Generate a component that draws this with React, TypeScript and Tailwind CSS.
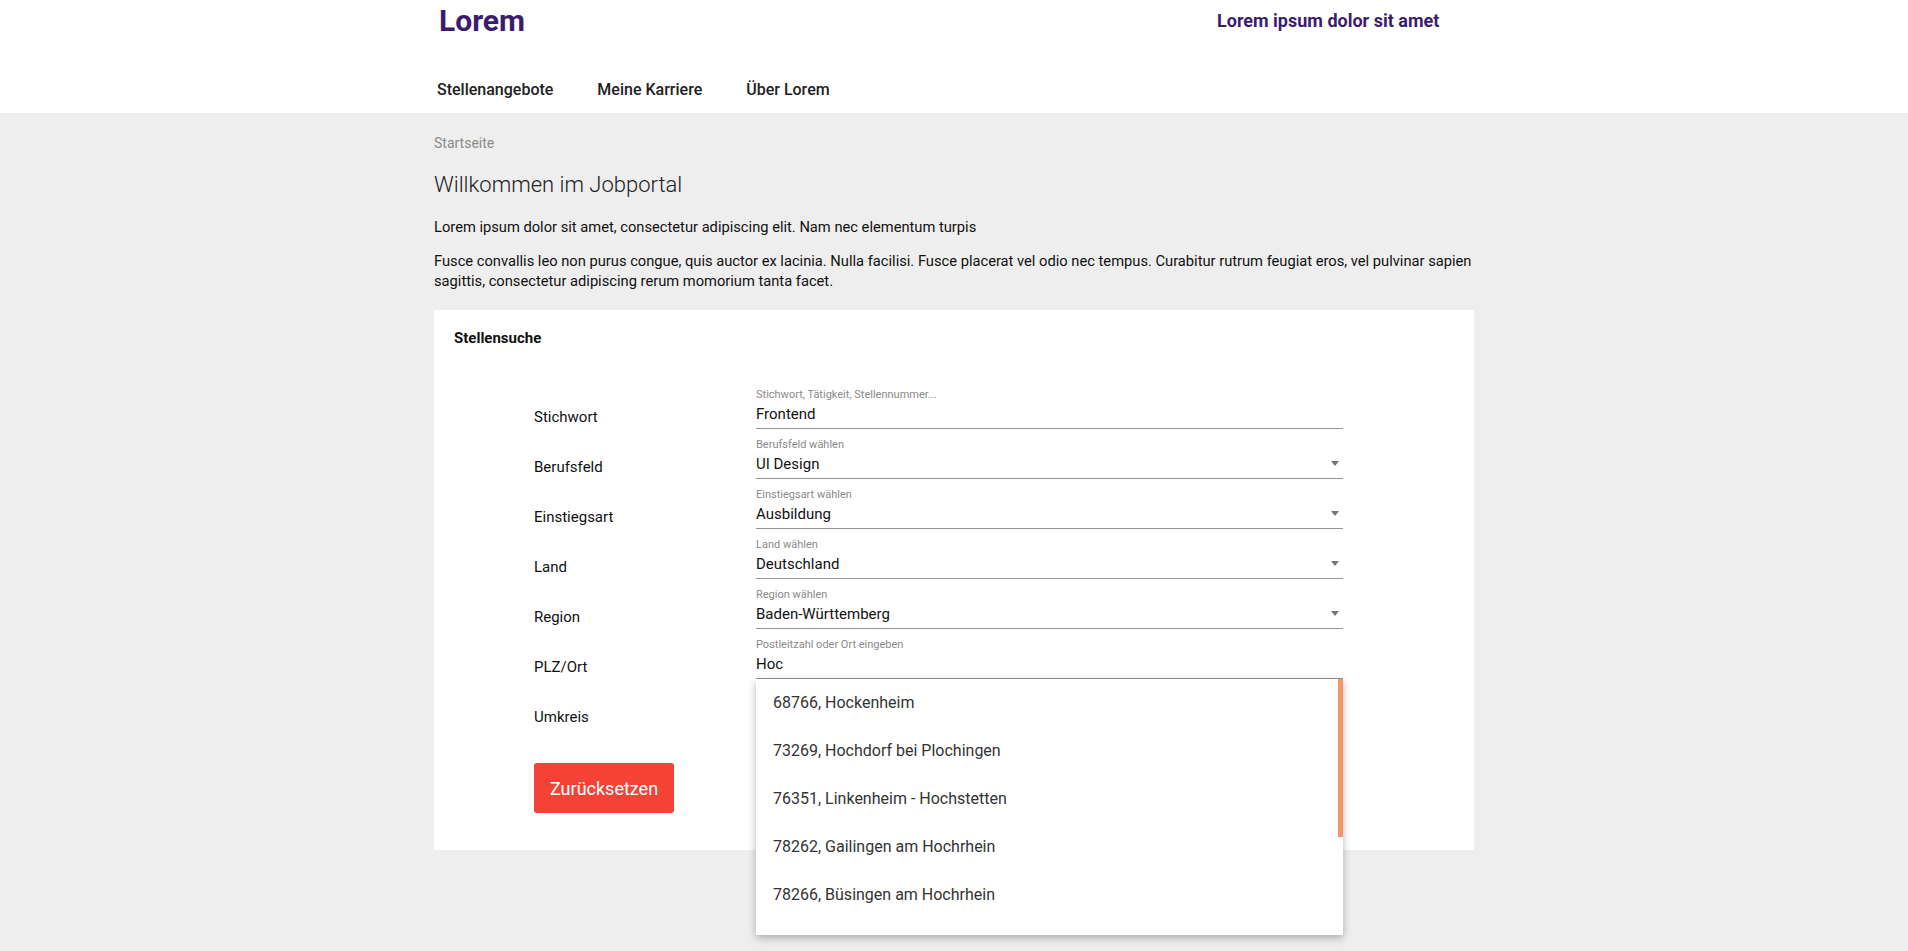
import { useState } from "react";

const fields = [
  { label: "Stichwort", hint: "Stichwort, Tätigkeit, Stellennummer...", value: "Frontend", select: false },
  { label: "Berufsfeld", hint: "Berufsfeld wählen", value: "UI Design", select: true },
  { label: "Einstiegsart", hint: "Einstiegsart wählen", value: "Ausbildung", select: true },
  { label: "Land", hint: "Land wählen", value: "Deutschland", select: true },
  { label: "Region", hint: "Region wählen", value: "Baden-Württemberg", select: true },
];

const orte = [
  "68766, Hockenheim",
  "73269, Hochdorf bei Plochingen",
  "76351, Linkenheim - Hochstetten",
  "78262, Gailingen am Hochrhein",
  "78266, Büsingen am Hochrhein",
];

function Arrow() {
  return (
    <svg width="8" height="5" viewBox="0 0 8 5" className="mb-[2px]">
      <path d="M0 0 L8 0 L4 5 Z" fill="#767676" />
    </svg>
  );
}

function Field({ hint, value, select }: { hint: string; value: string; select?: boolean }) {
  return (
    <div className="h-[41px] border-b border-[#949494]">
      <div className="text-[11px] leading-[14px] text-[#8a8a8a]">{hint}</div>
      <div className="mt-[2px] flex items-center justify-between pr-[4px] text-[15px] leading-[20px] text-[#111]">
        <span>{value}</span>
        {select && <Arrow />}
      </div>
    </div>
  );
}

export default function App() {
  const [plz] = useState("Hoc");

  return (
    <div className="min-h-screen bg-[#eeeeee] font-['Roboto',sans-serif]">
      <header className="h-[113px] bg-white">
        <div className="mx-auto w-[1040px]">
          <div className="flex items-start">
            <div className="w-[783px] pl-[5px] pt-[6px] text-[30px] font-bold leading-none text-[#3a1c6e]">
              Lorem
            </div>
            <div className="pt-[12px] text-[18px] font-bold leading-none text-[#3a1c6e]">
              Lorem ipsum dolor sit amet
            </div>
          </div>
          <nav className="mt-[46px] flex gap-[44px] pl-[3px] text-[16px] font-medium leading-none text-[#212121]">
            <span>Stellenangebote</span>
            <span>Meine Karriere</span>
            <span>Über Lorem</span>
          </nav>
        </div>
      </header>

      <main className="mx-auto w-[1040px] pb-[100px]">
        <div className="pt-[23px] text-[14px] leading-none text-[#8a8a8a]">Startseite</div>
        <h1 className="mt-[24px] text-[22px] font-light leading-none text-[#212121]">
          Willkommen im Jobportal
        </h1>
        <p className="mt-[21px] text-[14.7px] leading-[20px] text-[#111]">
          Lorem ipsum dolor sit amet, consectetur adipiscing elit. Nam nec elementum turpis
        </p>
        <p className="mt-[14px] w-[1070px] text-[14.7px] leading-[20px] text-[#111]">
          Fusce convallis leo non purus congue, quis auctor ex lacinia. Nulla facilisi. Fusce placerat vel odio nec
          tempus. Curabitur rutrum feugiat eros, vel pulvinar sapien sagittis, consectetur adipiscing rerum momorium
          tanta facet.
        </p>

        <section className="mt-[19px] bg-white px-[20px] pb-[37px] pt-[18px]">
          <h2 className="text-[15px] font-bold leading-[20px] text-[#111]">Stellensuche</h2>

          <div className="mt-[40px] flex flex-col gap-[9px] pl-[80px]">
            {fields.map((f) => (
              <div key={f.label} className="flex">
                <div className="w-[222px] pt-[19px] text-[15px] leading-[20px] text-[#111]">{f.label}</div>
                <div className="w-[587px]">
                  <Field hint={f.hint} value={f.value} select={f.select} />
                </div>
              </div>
            ))}

            <div className="flex">
              <div className="w-[222px] pt-[19px] text-[15px] leading-[20px] text-[#111]">PLZ/Ort</div>
              <div className="relative w-[587px]">
                <Field hint="Postleitzahl oder Ort eingeben" value={plz} />
                <div className="absolute left-0 top-full z-10 h-[256px] w-full overflow-hidden bg-white shadow-[0_3px_8px_rgba(0,0,0,0.28)]">
                  {orte.map((o) => (
                    <div key={o} className="flex h-[48px] items-center px-[17px] text-[16px] text-[#333]">
                      {o}
                    </div>
                  ))}
                  <div className="absolute right-0 top-0 h-[158px] w-[5px] bg-[#f7956a]" />
                </div>
              </div>
            </div>

            <div className="flex">
              <div className="w-[222px] pt-[19px] text-[15px] leading-[20px] text-[#111]">Umkreis</div>
              <div className="h-[41px] w-[587px] border-b border-[#949494]" />
            </div>
          </div>

          <button className="ml-[80px] mt-[34px] h-[50px] rounded-[3px] bg-[#f44336] px-[16px] text-[18px] text-white">
            Zurücksetzen
          </button>
        </section>
      </main>
    </div>
  );
}
